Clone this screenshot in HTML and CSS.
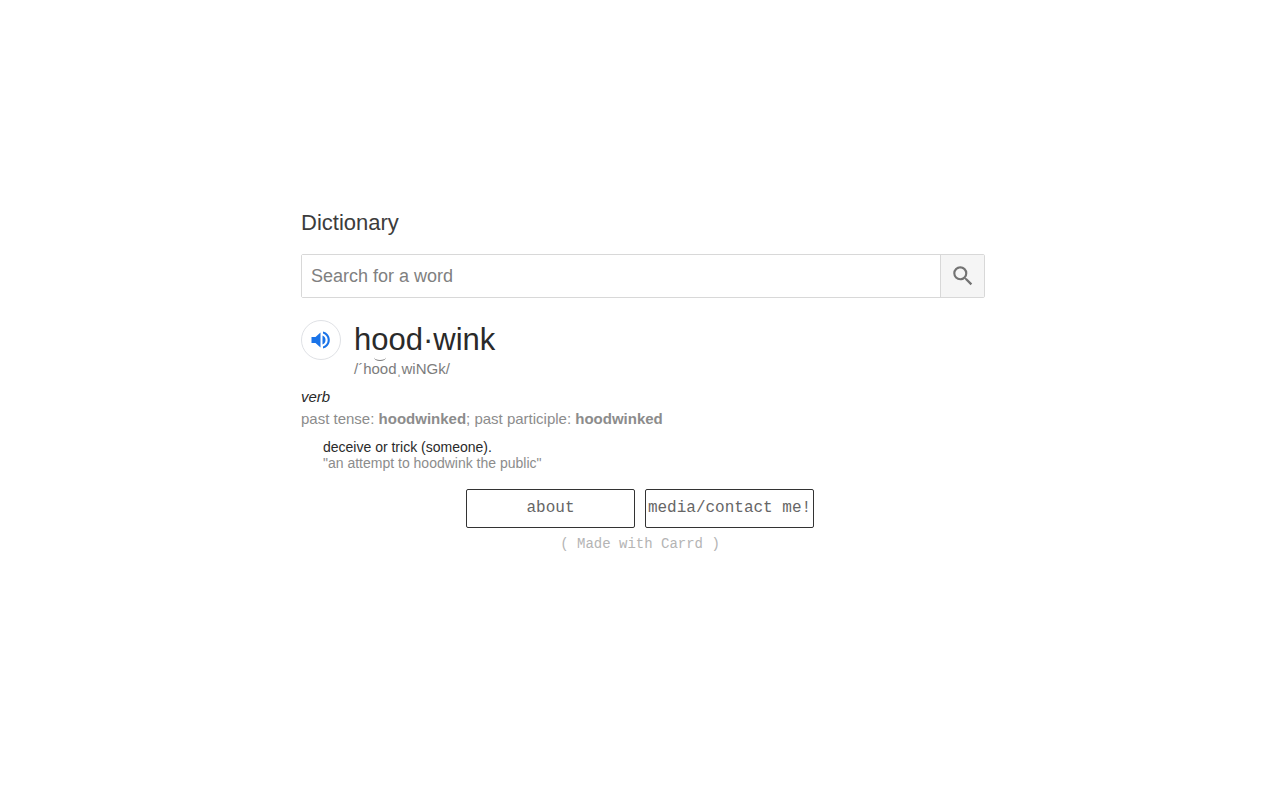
FILE: index.html
```
<!DOCTYPE html>
<html lang="en">
<head>
    <meta charset="UTF-8">
    <meta name="viewport" content="width=device-width, initial-scale=1">
    <title>hoodwink</title>
    <link rel="stylesheet" href="styles.css">
</head>
<body>
    <main class="wrapper">
        <section class="dictionary">
            <h1 class="title"><label for="word">Dictionary</label></h1>
            <form class="search">
                <input class="search-input" id="word" type="text" placeholder="Search for a word">
                <button class="search-button" type="button" aria-label="Search">
                    <svg width="26" height="26" viewBox="0 0 24 24"><path d="M15.5 14h-.79l-.28-.27A6.47 6.47 0 0 0 16 9.5 6.5 6.5 0 1 0 9.5 16c1.61 0 3.09-.59 4.23-1.57l.27.28v.79l5 4.99L20.49 19l-4.99-5zm-6 0C7.01 14 5 11.99 5 9.5S7.01 5 9.5 5 14 7.01 14 9.5 11.99 14 9.5 14z"/></svg>
                </button>
            </form>
            <div class="entry">
                <button class="speaker" type="button" aria-label="Listen">
                    <svg width="24" height="24" viewBox="0 0 24 24"><path d="M2.500 9v6h4l5 4.500v-15L6.500 9h-4zM13.500 7.500v9A4.700 4.700 0 0 0 16.500 12 4.700 4.700 0 0 0 13.500 7.500zM14 3.500v2.100c2.800.900 4.700 3.400 4.700 6.400s-1.900 5.500-4.700 6.400v2.100c4-.900 6.800-4.300 6.800-8.500s-2.800-7.600-6.800-8.500z"/></svg>
                </button>
                <div>
                    <h2 class="word">hood·wink</h2>
                    <p class="phonetic">/´h<span class="breve">oo</span>dˌwiNGk/</p>
                </div>
            </div>
            <p class="part">verb</p>
            <p class="forms">past tense: <b>hoodwinked</b>; past participle: <b>hoodwinked</b></p>
            <p class="meaning">deceive or trick (someone).</p>
            <p class="example">"an attempt to hoodwink the public"</p>
        </section>
        <nav class="links">
            <a class="link" href="#about">about</a>
            <a class="link" href="#contact">media/contact me!</a>
        </nav>
        <p class="credits"><a href="#carrd">( Made with Carrd )</a></p>
    </main>
</body>
</html>
```

FILE: styles.css
```
*{
    margin: 0;
    padding: 0;
    box-sizing: border-box;
}
body{
    min-height: 100vh;
    display: flex;
    align-items: center;
    justify-content: center;
    background: #fff;
    font-family: "Liberation Sans", Arial, sans-serif;
}
.wrapper{
    width: 100%;
    max-width: 690px;
    padding-bottom: 36px;
}
.dictionary{
    padding-left: 6px;
    color: #2a2a2a;
}
.title{
    font-size: 22px;
    line-height: 26px;
    font-weight: normal;
    color: #3c3c3c;
}
.search{
    display: flex;
    height: 44px;
    margin-top: 18px;
    border: 1px solid #d8d8d8;
    border-radius: 2px;
}
.search-input{
    flex: 1;
    min-width: 0;
    padding: 0 9px;
    border: 0;
    background: #fff;
    font-family: inherit;
    font-size: 18px;
    color: #222;
}
.search-input::placeholder{
    color: #808080;
    opacity: 1;
}
.search-button{
    display: flex;
    align-items: center;
    justify-content: center;
    width: 44px;
    border: 0;
    border-left: 1px solid #d8d8d8;
    background: #f5f5f5;
    cursor: pointer;
}
.search-button svg{
    fill: #737373;
}
.entry{
    display: flex;
    gap: 13px;
    margin-top: 22px;
}
.speaker{
    display: flex;
    align-items: center;
    justify-content: center;
    width: 40px;
    height: 40px;
    border: 1px solid #dfe1e5;
    border-radius: 50%;
    background: #fff;
    cursor: pointer;
}
.speaker svg{
    fill: #1a73e8;
}
.word{
    font-size: 31px;
    line-height: 40px;
    font-weight: normal;
}
.phonetic{
    font-size: 15px;
    line-height: 18px;
    color: #7c7c7c;
}
/* curved tie drawn above the double o */
.breve{
    position: relative;
}
.breve::before{
    content: "";
    position: absolute;
    top: -6px;
    left: 2px;
    width: 12px;
    height: 6px;
    border-bottom: 1px solid #7c7c7c;
    border-radius: 50%;
}
.part{
    margin-top: 9px;
    font-size: 15px;
    line-height: 20px;
    font-style: italic;
}
.forms{
    font-size: 15px;
    line-height: 24px;
    color: #8c8c8c;
}
.meaning,
.example{
    padding-left: 22px;
    font-size: 14px;
    line-height: 16px;
}
.meaning{
    margin-top: 8px;
}
.example{
    color: #8c8c8c;
}
.links{
    display: flex;
    justify-content: center;
    gap: 10px;
    margin-top: 18px;
}
.link{
    width: 169px;
    border: 1px solid #333;
    border-radius: 2px;
    font-family: "Courier New", "Liberation Mono", monospace;
    font-size: 16px;
    line-height: 37px;
    text-align: center;
    text-decoration: none;
    white-space: nowrap;
    color: #666;
}
.credits{
    margin-top: 6px;
    font-family: "Courier New", "Liberation Mono", monospace;
    font-size: 14px;
    line-height: 20px;
    text-align: center;
}
.credits a{
    color: #b4b4b4;
    text-decoration: none;
}
```
